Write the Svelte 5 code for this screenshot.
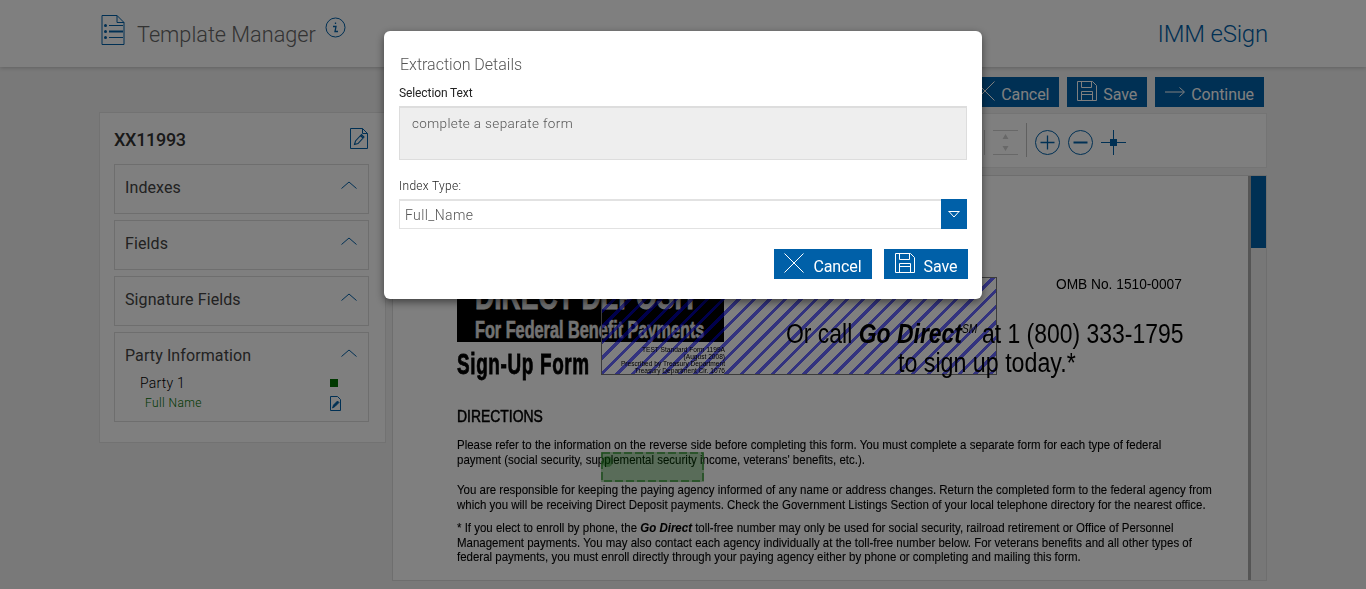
<script>
  const sections = ["Indexes", "Fields", "Signature Fields"];
</script>

<div class="page">
  <header class="topbar">
    <div class="title">
      <svg class="list-icon" width="24" height="30" viewBox="0 0 24 30" fill="none" stroke="#0060a8">
        <path d="M1 .5h15l7 7v22H1z M16 .5v7h7"/>
        <path d="M8 10.500h14 M8 22.500h14"/>
        <path d="M8 16.500h14" stroke-width="2"/>
        <circle cx="4.500" cy="10.500" r="1.500" fill="#0060a8" stroke="none"/>
        <circle cx="4.500" cy="16.500" r="1.500" fill="#0060a8" stroke="none"/>
        <circle cx="4.500" cy="22.500" r="1.500" fill="#0060a8" stroke="none"/>
      </svg>
      <h1>Template Manager</h1>
      <svg class="info-icon" width="21" height="21" viewBox="0 0 21 21" fill="none" stroke="#0060a8">
        <circle cx="10.500" cy="10.500" r="9.500"/>
        <path d="M10.500 5.500v1.500 M8 9.500h3l-1 5h3" stroke-width="1.300"/>
      </svg>
    </div>
    <div class="brand">IMM eSign</div>
  </header>

  <main class="content">
    <aside class="sidebar">
      <div class="side-head">
        <span class="doc-id">XX11993</span>
        <svg width="18" height="21" viewBox="0 0 18 21" fill="none" stroke="#0060a8">
          <path d="M.5.500h12l5 5v15H.5z M12.500.500v5h5"/>
          <path d="M4.500 16.500l1-3.500 6-6.500 2.500 2.500-6 6.500z M10.500 7.500l2.500 2.500" stroke-width="1.100"/>
        </svg>
      </div>
      {#each sections as name}
        <section class="card">
          <div class="card-head">
            <span>{name}</span>
            <svg width="16" height="8" viewBox="0 0 16 8" fill="none" stroke="#0060a8"><path d="M.5 7.500L8 1l7.500 6.500"/></svg>
          </div>
        </section>
      {/each}
      <section class="card party">
        <div class="card-head">
          <span>Party Information</span>
          <svg width="16" height="8" viewBox="0 0 16 8" fill="none" stroke="#0060a8"><path d="M.5 7.500L8 1l7.500 6.500"/></svg>
        </div>
        <div class="party-row">
          <span>Party 1</span>
          <i class="swatch"></i>
        </div>
        <div class="field-row">
          <span>Full Name</span>
          <svg width="11" height="15" viewBox="0 0 11 15" fill="none" stroke="#0060a8">
            <path d="M.5.500h7l3 3v11H.5z"/>
            <path d="M2.500 12l1-3 4-4 1.500 1.500-4 4z" fill="#0060a8" stroke-width=".8"/>
          </svg>
        </div>
      </section>
    </aside>

    <div class="workspace">
      <div class="actions">
        <button class="btn">
          <svg width="20" height="20" viewBox="0 0 20 20" stroke="#fff" fill="none"><path d="M.5.500l19 19 M19.500.500l-19 19"/></svg>
          <span>Cancel</span>
        </button>
        <button class="btn">
          <svg width="20" height="20" viewBox="0 0 20 20" stroke="#fff" fill="none"><path d="M.5.500h15l4 4v15H.5z M4.500.500v6h10v-6 M4.500 19.500v-9h11v9 M4.500 13.500h11"/></svg>
          <span>Save</span>
        </button>
        <button class="btn">
          <svg class="arrow" width="20" height="10" viewBox="0 0 20 10" stroke="#fff" fill="none"><path d="M0 5h19 M14.500.500L19.500 5l-5 4.500"/></svg>
          <span>Continue</span>
        </button>
      </div>

      <div class="toolbar">
        <svg width="25" height="25" viewBox="0 0 25 25" fill="none" stroke="#d0d0d0">
          <path d="M24.500 0v25"/>
        </svg>
        <svg width="25" height="25" viewBox="0 0 25 25" fill="none" stroke="#d0d0d0">
          <path d="M0 .5h25 M0 24.500h25"/>
          <path d="M12.500 4l-3 5h6z M12.500 21l-3-5h6z" fill="#d0d0d0" stroke="none"/>
        </svg>
        <i class="tool-sep"></i>
        <svg width="25" height="25" viewBox="0 0 25 25" fill="none" stroke="#0060a8">
          <circle cx="12.500" cy="12.500" r="12"/><path d="M5.500 12.500h14 M12.500 5.500v14" stroke-width="1.300"/>
        </svg>
        <svg width="25" height="25" viewBox="0 0 25 25" fill="none" stroke="#0060a8">
          <circle cx="12.500" cy="12.500" r="12"/><path d="M5.500 12.500h14" stroke-width="2"/>
        </svg>
        <svg width="25" height="25" viewBox="0 0 25 25" fill="#0060a8" stroke="#0060a8">
          <path d="M0 12.500h25 M12.500 0v25"/><rect x="9" y="9" width="7" height="7" stroke="none"/>
        </svg>
      </div>

      <div class="viewer">
        <div class="sheet">
          <div class="masthead">
            <div class="banner">
              <div class="banner-big">DIRECT DEPOSIT</div>
              <div class="banner-small">For Federal Benefit Payments</div>
            </div>
            <div class="signup">Sign-Up Form</div>
            <div class="stripes">
              <div class="fine">TEST Standard Form 1199A<br>(August 2008)<br>Prescribed by Treasury Department<br>Treasury Department Cir. 1076</div>
            </div>
            <div class="omb">OMB No. 1510-0007</div>
            <div class="call">Or call <b><em>Go Direct</em></b><sup>SM</sup> at 1 (800) 333-1795</div>
            <div class="call second">to sign up today.*</div>
          </div>

          <h2>DIRECTIONS</h2>
          <p class="pa">Please refer to the information on the reverse side before completing this form. You must complete a separate form for each type of federal<br>payment (social security, supplemental security income, veterans' benefits, etc.).</p>
          <p class="pb">You are responsible for keeping the paying agency informed of any name or address changes. Return the completed form to the federal agency from<br>which you will be receiving Direct Deposit payments. Check the Government Listings Section of your local telephone directory for the nearest office.</p>
          <p class="pc">* If you elect to enroll by phone, the <b><em>Go Direct</em></b> toll-free number may only be used for social security, railroad retirement or Office of Personnel<br>Management payments. You may also contact each agency individually at the toll-free number below. For veterans benefits and all other types of<br>federal payments, you must enroll directly through your paying agency either by phone or completing and mailing this form.</p>
          <div class="selection">
            <svg width="103" height="30" viewBox="0 0 103 30" fill="none" stroke="#3a9a3a" stroke-width="1.500" stroke-dasharray="8 3">
              <rect x="1" y="1" width="101" height="28"/>
            </svg>
            <i></i>
          </div>
        </div>
        <div class="scrollbar"><div class="thumb"></div></div>
      </div>
    </div>
  </main>

  <div class="overlay"></div>

  <div class="modal">
    <h3>Extraction Details</h3>
    <label for="sel">Selection Text</label>
    <div id="sel" class="readonly">complete a separate form</div>
    <label for="idx" class="second-label">Index Type:</label>
    <div id="idx" class="select">
      <span>Full_Name</span>
      <div class="caret">
        <svg width="12" height="7" viewBox="0 0 12 7" fill="none" stroke="#fff"><path d="M.5.500h11 M1 .5l5 5.500 5-5.500"/></svg>
      </div>
    </div>
    <div class="modal-actions">
      <button class="btn cancel">
        <svg width="20" height="20" viewBox="0 0 20 20" stroke="#fff" fill="none"><path d="M.5.500l19 19 M19.500.500l-19 19"/></svg>
        <span>Cancel</span>
      </button>
      <button class="btn save">
        <svg width="20" height="20" viewBox="0 0 20 20" stroke="#fff" fill="none"><path d="M.5.500h15l4 4v15H.5z M4.500.500v6h10v-6 M4.500 19.500v-9h11v9 M4.500 13.500h11"/></svg>
        <span>Save</span>
      </button>
    </div>
  </div>
</div>

<style>
  :global(body) {
    margin: 0;
    background: #f2f2f2;
  }
  .page {
    position: relative;
    width: 1366px;
    height: 589px;
    overflow: hidden;
    background: #f2f2f2;
    font-family: Roboto, "Liberation Sans", sans-serif;
    color: #333;
  }
  .topbar {
    height: 67px;
    background: #fff;
    box-shadow: 0 1px 4px rgba(0,0,0,.2);
    display: flex;
    justify-content: space-between;
    padding: 0 98px 0 101px;
    position: relative;
  }
  .title {
    display: flex;
    align-items: flex-start;
  }
  .list-icon {
    margin-top: 15px;
  }
  h1 {
    margin: 21px 0 0 12px;
    font-weight: 300;
    font-size: 21.700px;
    line-height: 28px;
    color: #666;
  }
  .info-icon {
    margin: 17px 0 0 9px;
  }
  .brand {
    margin-top: 20px;
    font-weight: 300;
    font-size: 24px;
    line-height: 28px;
    letter-spacing: -.2px;
    color: #0060a8;
  }
  .content {
    display: flex;
    padding: 10px 99px 0;
    gap: 6px;
  }
  .sidebar {
    height: 329px;
    margin-top: 35px;
    background: #fff;
    border: 1px solid #e4e4e4;
    padding: 0 16px 0 14px;
    flex-shrink: 0;
    width: 255px;
  }
  .side-head {
    height: 51px;
    display: flex;
    justify-content: space-between;
    align-items: center;
    padding: 0 1px 0 0;
  }
  .side-head svg {
    margin-top: -1px;
  }
  .doc-id {
    font-size: 18px;
    font-weight: 500;
    letter-spacing: -.3px;
    color: #333;
    margin-top: 2px;
  }
  .card {
    height: 48px;
    border: 1px solid #ddd;
    margin-bottom: 6px;
    padding: 0 11px 0 10px;
  }
  .card-head {
    height: 44px;
    display: flex;
    justify-content: space-between;
    align-items: center;
    font-size: 16px;
    letter-spacing: .1px;
    color: #444;
  }
  .card-head svg {
    margin-top: -5px;
  }
  .party {
    height: 88px;
  }
  .party-row, .field-row {
    display: flex;
    justify-content: space-between;
    align-items: center;
  }
  .party-row {
    padding: 0 19px 0 15px;
    font-size: 14px;
    font-weight: 300;
    letter-spacing: .2px;
    color: #000;
    height: 16px;
    margin-top: -2px;
  }
  .swatch {
    width: 8px;
    height: 8px;
    background: #007000;
  }
  .field-row {
    padding: 0 16px 0 20px;
    font-size: 12px;
    letter-spacing: .4px;
    font-weight: 300;
    color: #007000;
    height: 20px;
    margin-top: 2px;
  }
  .workspace {
    width: 875px;
    min-width: 0;
    display: flex;
    flex-direction: column;
  }
  .actions {
    display: flex;
    justify-content: flex-end;
    gap: 8px;
    padding-right: 3px;
    height: 36px;
  }
  .btn {
    height: 30px;
    border: 0;
    padding: 0 10px;
    display: flex;
    align-items: center;
    gap: 6px;
    background: #0060a8;
    color: #fff;
    font-family: Roboto, "Liberation Sans", sans-serif;
    font-size: 16px;
    letter-spacing: -.1px;
  }
  .btn svg {
    margin-top: -3px;
  }
  .btn svg.arrow {
    margin-top: 0;
  }
  .btn span {
    margin-top: 4px;
  }
  .toolbar {
    height: 49px;
    padding: 4px 140px 0 0;
    background: #fff;
    border: 1px solid #e8e8e8;
    display: flex;
    align-items: center;
    justify-content: flex-end;
    gap: 8px;
  }
  .tool-sep {
    width: 1px;
    height: 34px;
    background: #c0c0c0;
    margin: -5px 0 0 0;
  }
  .viewer {
    margin-top: 7px;
    height: 404px;
    border: 1px solid #ddd;
    background: #fff;
    display: flex;
    overflow: hidden;
  }
  .sheet {
    position: relative;
    flex: 1;
    min-width: 0;
    overflow: hidden;
    padding-left: 64px;
    color: #000;
    font-family: "Liberation Sans", Arial, sans-serif;
    filter: blur(.5px);
    white-space: nowrap;
  }
  .masthead {
    height: 223px;
    position: relative;
  }
  .banner {
    position: absolute;
    left: 0;
    top: 100px;
    width: 267px;
    height: 66px;
    background: #000;
    color: #e4e4e4;
    font-weight: 700;
    overflow: hidden;
  }
  .banner-big {
    font-size: 38px;
    line-height: 40px;
    margin-left: 18px;
    transform: scaleX(.7);
    transform-origin: 0 0;
    -webkit-text-stroke: .8px #e4e4e4;
  }
  .banner-small {
    font-size: 24px;
    line-height: 22px;
    margin: 3px 0 0 18px;
    transform: scaleX(.677);
    transform-origin: 0 0;
    -webkit-text-stroke: .6px #e4e4e4;
  }
  .signup {
    position: absolute;
    left: 0;
    top: 173px;
    font-size: 29px;
    line-height: 30px;
    font-weight: 700;
    transform: scaleX(.652);
    transform-origin: 0 0;
    letter-spacing: 1px;
    -webkit-text-stroke: .8px #000;
  }
  .stripes {
    position: absolute;
    left: 144px;
    top: 101px;
    width: 394px;
    height: 96px;
    border: 1px solid #777;
    background: repeating-linear-gradient(135deg, rgba(0,0,255,.6) 0 3.200px, transparent 3.200px 11px);
    text-align: right;
  }
  .fine {
    position: absolute;
    left: 0;
    width: 123px;
    bottom: 0;
    font-size: 6.600px;
    line-height: 7px;
  }
  .omb {
    position: absolute;
    left: 599px;
    top: 99px;
    font-size: 15px;
    line-height: 18px;
    transform: scaleX(.915);
    transform-origin: 0 0;
  }
  .call {
    position: absolute;
    left: 329px;
    top: 142px;
    font-size: 27px;
    line-height: 32px;
    transform: scaleX(.85);
    transform-origin: 0 0;
  }
  .call sup {
    font-size: 12px;
    font-style: italic;
    line-height: 0;
    margin-right: -2px;
  }
  .call.second {
    left: 441px;
    top: 171px;
    transform: scaleX(.86);
  }
  h2 {
    margin: 0;
    font-size: 16px;
    line-height: 18px;
    font-weight: 400;
    -webkit-text-stroke: .5px #000;
    padding-top: 9px;
    transform: scaleX(.87);
    transform-origin: 0 0;
  }
  p {
    margin: 0;
    font-size: 12.400px;
    line-height: 15px;
    transform: scaleX(.927);
    transform-origin: 0 0;
    -webkit-text-stroke: .1px #000;
  }
  .pa { margin-top: 12px; }
  .pb { margin-top: 15px; }
  .pc { margin-top: 8px; line-height: 14.500px; }
  .selection {
    position: absolute;
    left: 208px;
    top: 276px;
    width: 103px;
    height: 30px;
    background: rgba(0,130,0,.3);
  }
  .selection svg {
    display: block;
  }
  .selection i {
    position: absolute;
    left: 1px;
    top: 4px;
    width: 11px;
    height: 11px;
    border-radius: 50%;
    background: rgba(0,120,0,.4);
  }
  .scrollbar {
    width: 15px;
    border-left: 3px solid #aaa;
    background: #eee;
    flex-shrink: 0;
    margin-top: -1px;
  }
  .thumb {
    height: 73px;
    background: #0060a8;
  }
  .overlay {
    position: absolute;
    inset: 0;
    background: rgba(0,0,0,.5);
  }
  .modal {
    position: absolute;
    left: 384px;
    top: 31px;
    width: 598px;
    height: 268px;
    box-sizing: border-box;
    padding: 0 15px;
    background: #fff;
    border-radius: 6px;
    box-shadow: 0 3px 9px rgba(0,0,0,.5);
  }
  h3 {
    margin: 24px 0 0 1px;
    font-size: 16px;
    line-height: 19px;
    font-weight: 300;
    color: #555;
  }
  label {
    display: block;
    font-size: 12px;
    line-height: 14px;
    color: #222;
    margin-top: 12px;
    letter-spacing: -.1px;
  }
  .readonly {
    margin-top: 6px;
    height: 54px;
    box-sizing: border-box;
    background: #eee;
    border: 1px solid #ddd;
    border-top-width: 2px;
    padding: 7px 12px;
    font-size: 13.500px;
    line-height: 16px;
    font-weight: 300;
    letter-spacing: .36px;
    color: #555;
  }
  .second-label {
    margin-top: 19px;
    letter-spacing: .3px;
    font-weight: 300;
  }
  .select {
    margin-top: 6px;
    width: 568px;
    height: 30px;
    box-sizing: border-box;
    border: 1px solid #e2e2e2;
    border-top-width: 2px;
    display: flex;
    justify-content: space-between;
    align-items: center;
    padding-left: 5px;
    font-size: 14px;
    font-weight: 300;
    letter-spacing: .4px;
    color: #555;
  }
  .caret {
    width: 26px;
    height: 30px;
    margin: -2px -1px -1px 0;
    background: #0060a8;
    display: flex;
    align-items: center;
    justify-content: center;
  }
  .modal-actions {
    display: flex;
    justify-content: flex-end;
    gap: 12px;
    margin: 20px -1px 0 0;
  }
  .modal-actions .btn {
    justify-content: center;
    gap: 9px;
    padding: 0;
  }
  .cancel { width: 98px; }
  .save { width: 84px; }
</style>
